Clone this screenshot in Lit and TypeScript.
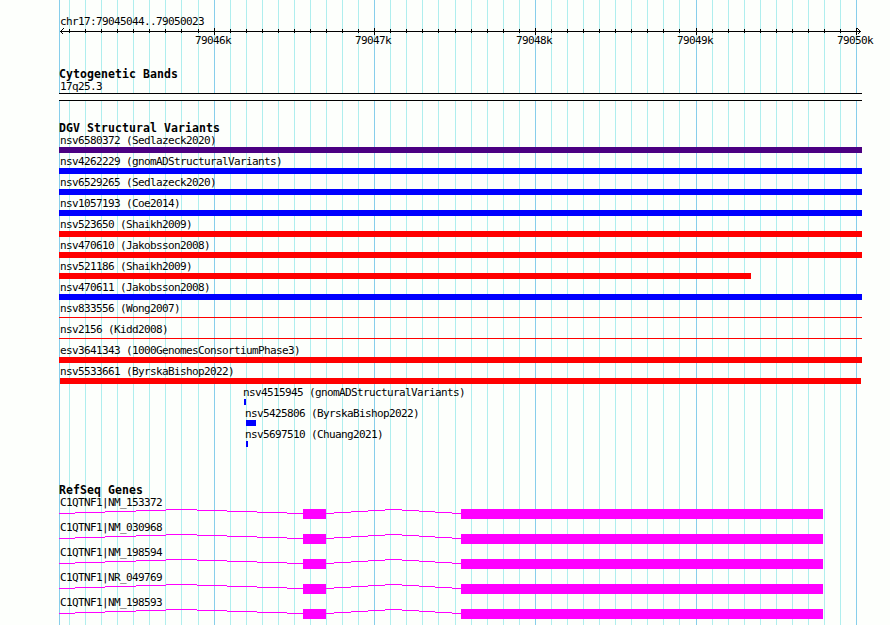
import { LitElement, css, html, svg } from "lit";
import { customElement } from "lit/decorators.js";

interface Feature {
    label: string;
    start: number;
    width: number;
    kind: string;
}

// Pixel range of the drawn region
const LEFT = 59;
const SPAN = 803;

const minorStep = 16.064;
const ticks = Array.from({ length: 50 }, (_, i) => ({
    x: Math.floor(69.515 + minorStep * i),
    major: i % 10 === 9,
}));

const scaleLabels = [
    { text: "79046k", x: 195 },
    { text: "79047k", x: 355 },
    { text: "79048k", x: 516 },
    { text: "79049k", x: 677 },
    { text: "79050k", x: 837 },
];

const variants: Feature[] = [
    { label: "nsv6580372 (Sedlazeck2020)", start: 0, width: SPAN, kind: "complex" },
    { label: "nsv4262229 (gnomADStructuralVariants)", start: 0, width: SPAN, kind: "gain" },
    { label: "nsv6529265 (Sedlazeck2020)", start: 0, width: SPAN, kind: "gain" },
    { label: "nsv1057193 (Coe2014)", start: 0, width: SPAN, kind: "gain" },
    { label: "nsv523650 (Shaikh2009)", start: 0, width: SPAN, kind: "loss" },
    { label: "nsv470610 (Jakobsson2008)", start: 0, width: SPAN, kind: "loss" },
    { label: "nsv521186 (Shaikh2009)", start: 0, width: 692, kind: "loss" },
    { label: "nsv470611 (Jakobsson2008)", start: 0, width: SPAN, kind: "gain" },
    { label: "nsv833556 (Wong2007)", start: 0, width: SPAN, kind: "loss thin" },
    { label: "nsv2156 (Kidd2008)", start: 0, width: SPAN, kind: "loss thin" },
    { label: "esv3641343 (1000GenomesConsortiumPhase3)", start: 0, width: SPAN, kind: "loss" },
    { label: "nsv5533661 (ByrskaBishop2022)", start: 1, width: SPAN - 2, kind: "loss" },
    { label: "nsv4515945 (gnomADStructuralVariants)", start: 185, width: 2, kind: "gain" },
    { label: "nsv5425806 (ByrskaBishop2022)", start: 187, width: 10, kind: "gain" },
    { label: "nsv5697510 (Chuang2021)", start: 187, width: 2, kind: "gain" },
];

const genes = ["NM_153372", "NM_030968", "NM_198594", "NR_049769", "NM_198593"];

// [start, end, y] for each step of the intron lines
const introns = [
    [0, 16, 4], [16, 46, 3], [46, 77, 2], [77, 107, 1], [107, 138, 0],
    [138, 168, 1], [168, 198, 2], [198, 228, 3], [228, 244, 4],
    [267, 275, 4], [275, 292, 3], [292, 309, 2], [309, 326, 1], [326, 343, 0],
    [343, 360, 1], [360, 376, 2], [376, 393, 3], [393, 402, 4],
];

@customElement("dgv-ruler")
export class DgvRuler extends LitElement {
    static styles = css`
        :host {
            display: block;
            height: 36px;
        }

        svg {
            display: block;
        }

        text {
            font: 11px "DejaVu Sans Mono", monospace;
            letter-spacing: -0.622px;
        }
    `;

    render() {
        return html`
            <svg width="890" height="36" shape-rendering="crispEdges">
                <text x="60" y="14">chr17:79045044..79050023</text>
                <rect x="60" y="20" width="801" height="1" />
                ${ticks.map(t => t.major
                    ? svg`<rect x=${t.x} y="17" width="1" height="7" />`
                    : svg`<rect x=${t.x} y="18" width="1" height="4" />`)}
                <path d="M63.5 17.5 L60.5 20.5 L63.5 23.5 M857.5 17.5 L860.5 20.5 L857.5 23.5" fill="none" stroke="#000" />
                ${scaleLabels.map(l => svg`<text x=${l.x} y="33">${l.text}</text>`)}
            </svg>
        `;
    }
}

@customElement("dgv-feature")
export class DgvFeature extends LitElement {
    static properties = {
        feature: { type: Object },
    };

    declare feature: Feature;

    static styles = css`
        :host {
            display: block;
            height: 21px;
        }

        .feature {
            display: flex;
            flex-direction: column;
        }

        .label {
            height: 13px;
            line-height: 13px;
            padding-left: 1px;
            white-space: pre;
        }

        .inset .label {
            padding-left: 0;
            margin-left: -1px;
        }

        .glyph {
            height: 6px;
        }

        .complex {
            background: #4b0082;
        }

        .gain {
            background: #00f;
        }

        .loss {
            background: #f00;
        }

        .thin {
            height: 1px;
            margin-top: 2px;
        }
    `;

    render() {
        const { label, start, width, kind } = this.feature;
        return html`
            <div class="feature ${start > 1 ? "inset" : ""}" style="margin-left: ${start > 1 ? start : 0}px">
                <div class="label">${label}</div>
                <div class="glyph ${kind}" style="width: ${width}px; margin-left: ${start === 1 ? 1 : 0}px"></div>
            </div>
        `;
    }
}

@customElement("dgv-gene")
export class DgvGene extends LitElement {
    static properties = {
        name: { type: String },
    };

    declare name: string;

    static styles = css`
        :host {
            display: block;
            height: 25px;
        }

        .label {
            height: 13px;
            line-height: 13px;
            padding-left: 1px;
        }

        svg {
            display: block;
            fill: #f0f;
        }
    `;

    render() {
        return html`
            <div class="label">C1QTNF1|${this.name}</div>
            <svg width="803" height="12" shape-rendering="crispEdges">
                ${introns.map(([start, end, y]) => svg`<rect x=${start} y=${y} width=${end - start} height="1" />`)}
                <rect x="244" y="0" width="23" height="10" />
                <rect x="402" y="0" width="362" height="10" />
            </svg>
        `;
    }
}

@customElement("app-root")
export class AppRoot extends LitElement {
    static styles = css`
        :host {
            display: block;
            position: relative;
            width: 890px;
            height: 625px;
            overflow: hidden;
            background: #fdfffc;
            color: #000;
            font: 11px "DejaVu Sans Mono", monospace;
            letter-spacing: -0.622px;
        }

        .grid {
            position: absolute;
            inset: 0;
        }

        .minor {
            fill: #afeeee;
        }

        .major {
            fill: #87ceeb;
        }

        .tracks {
            position: relative;
            padding-top: 11px;
        }

        section {
            padding-left: 59px;
        }

        h2 {
            margin: 0;
            height: 12px;
            font-size: 11.5px;
            line-height: 13px;
            letter-spacing: 0.077px;
        }

        .cytobands {
            margin-top: 21px;
        }

        .band-label {
            height: 13px;
            line-height: 13px;
            padding-left: 1px;
        }

        .band {
            box-sizing: border-box;
            width: 803px;
            height: 8px;
            border: solid #000;
            border-width: 1px 0;
            background: #fdfffc;
        }

        .variants {
            margin-top: 21px;
        }

        .genes {
            margin-top: 35px;
        }
    `;

    render() {
        return html`
            <svg class="grid" width="890" height="625" shape-rendering="crispEdges">
                <rect class="major" x=${LEFT} y="0" width="1" height="625" />
                ${ticks.map(t => svg`<rect class=${t.major ? "major" : "minor"} x=${t.x} y="0" width="1" height="625" />`)}
            </svg>
            <div class="tracks">
                <dgv-ruler></dgv-ruler>
                <section class="cytobands">
                    <h2>Cytogenetic Bands</h2>
                    <div class="band-label">17q25.3</div>
                    <div class="band"></div>
                </section>
                <section class="variants">
                    <h2>DGV Structural Variants</h2>
                    ${variants.map(v => html`<dgv-feature .feature=${v}></dgv-feature>`)}
                </section>
                <section class="genes">
                    <h2>RefSeq Genes</h2>
                    ${genes.map(g => html`<dgv-gene .name=${g}></dgv-gene>`)}
                </section>
            </div>
        `;
    }
}
